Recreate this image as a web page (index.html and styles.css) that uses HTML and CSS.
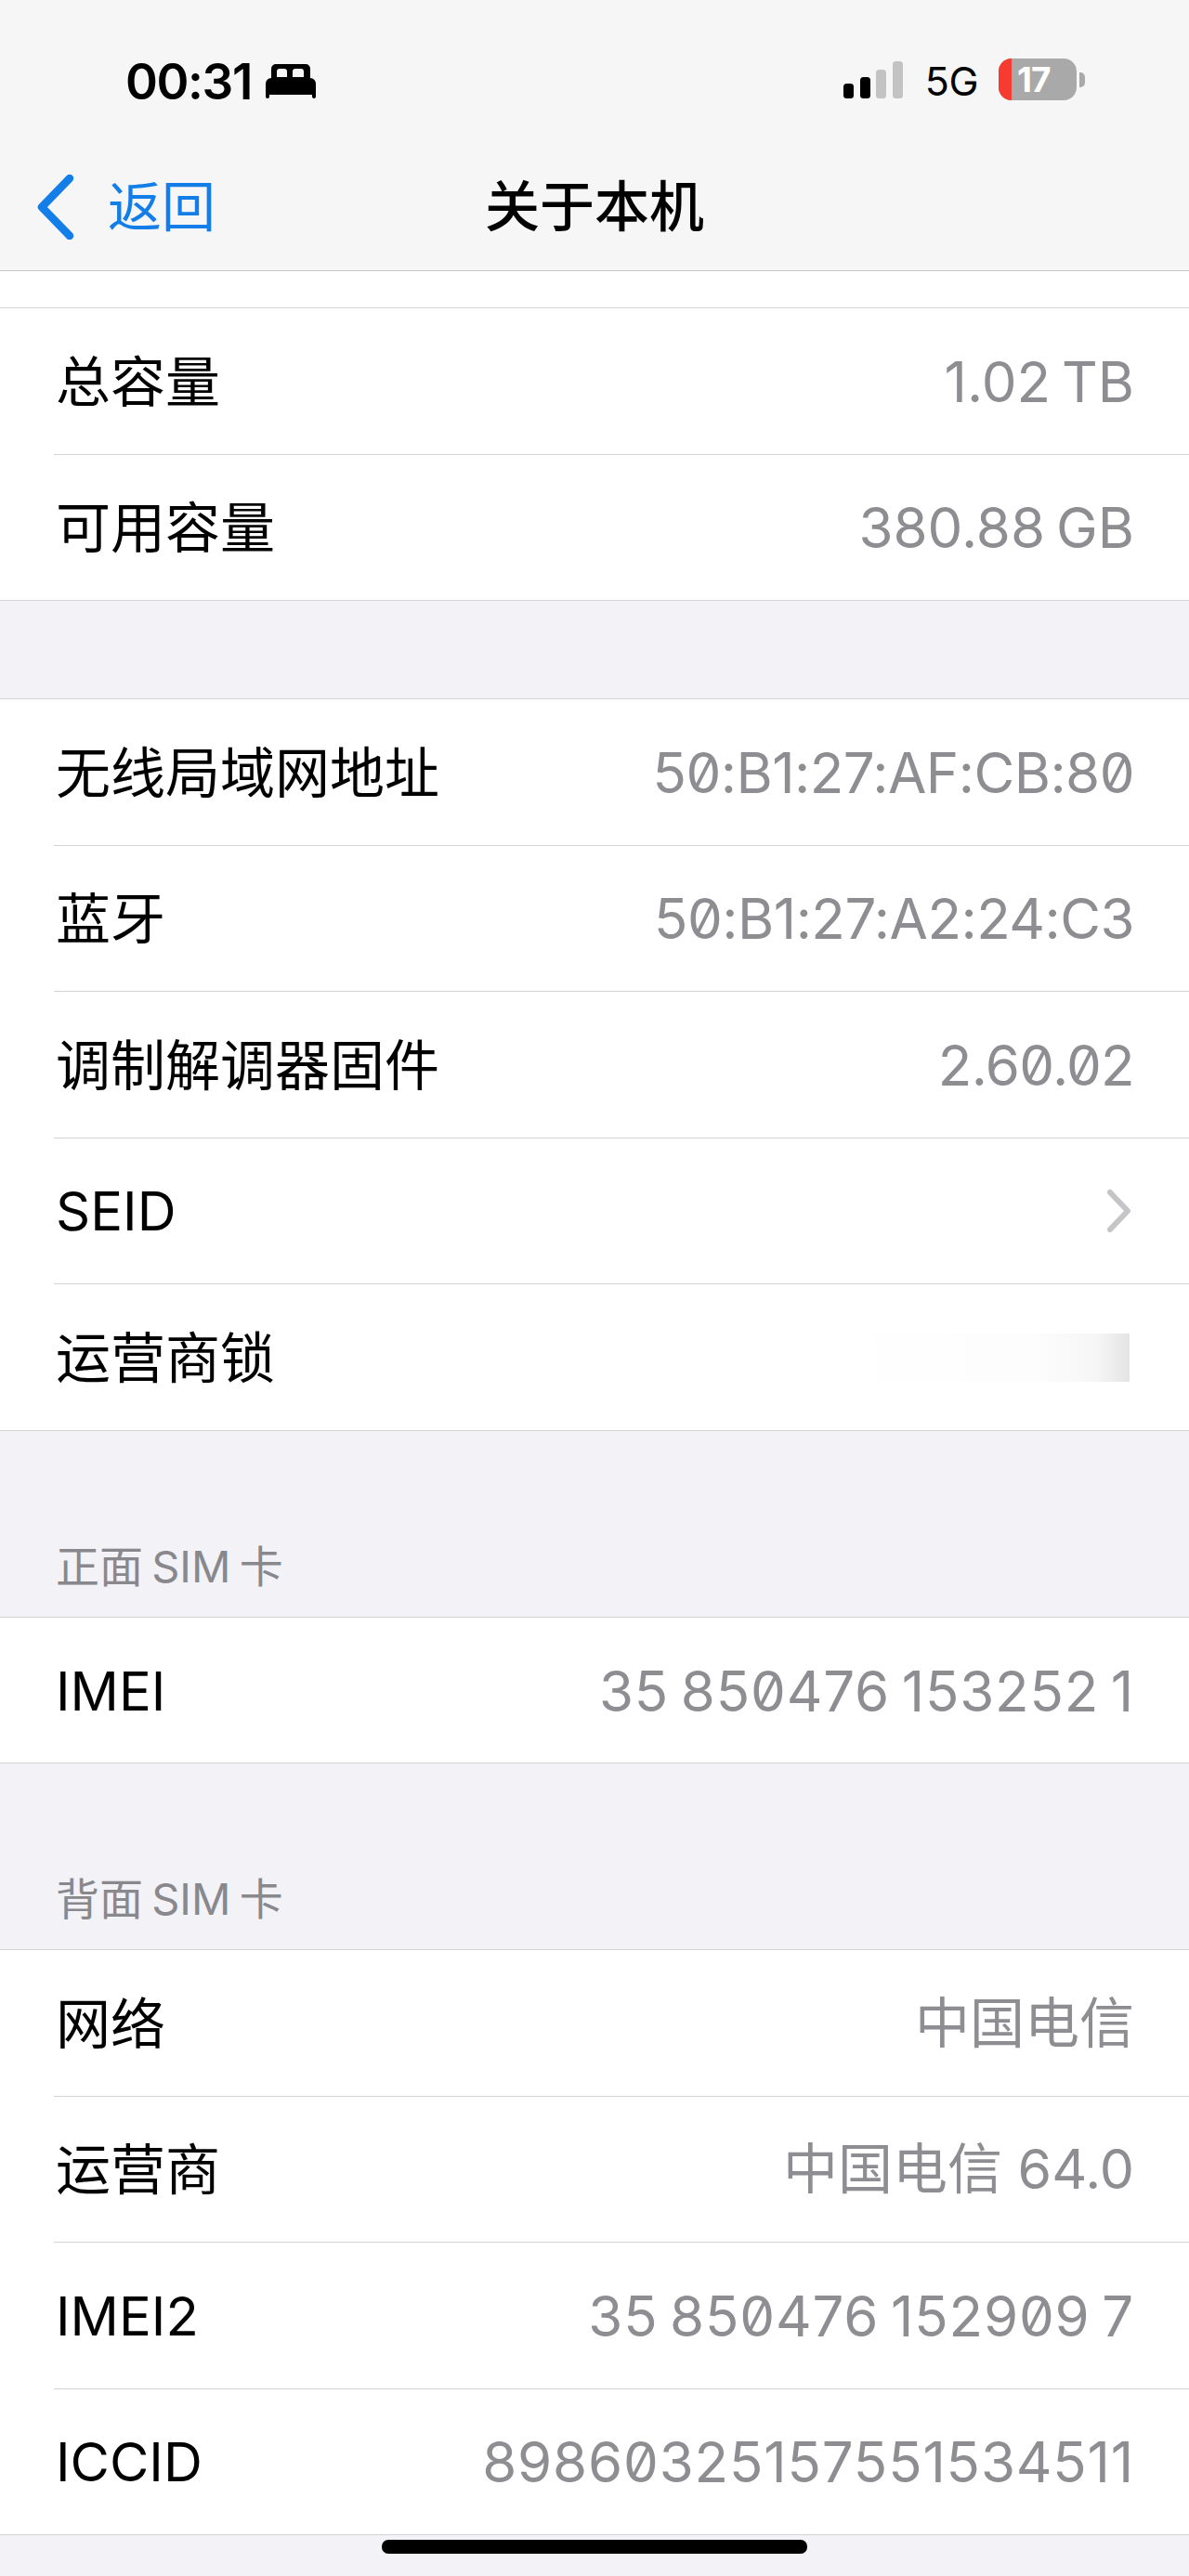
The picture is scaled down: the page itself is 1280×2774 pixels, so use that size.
FILE: index.html
```html
<!DOCTYPE html>
<html lang="zh">
<head>
<meta charset="utf-8">
<title>关于本机</title>
<link rel="stylesheet" href="styles.css">
</head>
<body>
<div class="screen">
  <header class="top">
    <div class="status">
      <div class="status-left">
        <span class="time">00:31</span>
        <svg class="bed" viewBox="0 0 54 37" aria-hidden="true"><path fill-rule="evenodd" d="M11 0h32a5 5 0 0 1 5 5v10a6 6 0 0 1 6 6v14a2 2 0 0 1-4 0v-2H4v2a2 2 0 0 1-4 0V21a6 6 0 0 1 6-6V5a5 5 0 0 1 5-5zM12 14V8a3 3 0 0 1 3-3h5a3 3 0 0 1 3 3v6zM29 14V8a3 3 0 0 1 3-3h6a3 3 0 0 1 3 3v6z"/></svg>
      </div>
      <div class="status-right">
        <span class="signal"><i class="b1"></i><i class="b2"></i><i class="b3 dim"></i><i class="b4 dim"></i></span>
        <span class="net">5G</span>
        <span class="battery"><span class="fill"></span><span class="level">17</span></span><span class="cap"></span>
      </div>
    </div>
    <nav class="nav">
      <a class="back"><svg class="chev" viewBox="0 0 40 70" aria-hidden="true"><path d="M35 4 5 35l30 31"/></svg><span>返回</span></a>
      <h1>关于本机</h1>
    </nav>
  </header>
  <div class="stub"></div>
  <section class="group">
    <div class="row"><span class="k">总容量</span><span class="v size">1.02 TB</span></div>
    <div class="row"><span class="k">可用容量</span><span class="v size">380.88 GB</span></div>
  </section>
  <section class="group g2">
    <div class="row"><span class="k">无线局域网地址</span><span class="v mac">50:B1:27:AF:CB:80</span></div>
    <div class="row"><span class="k">蓝牙</span><span class="v mac">50:B1:27:A2:24:C3</span></div>
    <div class="row"><span class="k">调制解调器固件</span><span class="v ver">2.60.02</span></div>
    <div class="row"><span class="k lat">SEID</span><svg class="more" viewBox="0 0 30 48" aria-hidden="true"><path d="m5 4 19 20L5 44"/></svg></div>
    <div class="row"><span class="k">运营商锁</span><span class="blur"></span></div>
  </section>
  <h2 class="cap-head">正面 SIM 卡</h2>
  <section class="group">
    <div class="row"><span class="k lat">IMEI</span><span class="v">35 850476 153252 1</span></div>
  </section>
  <h2 class="cap-head">背面 SIM 卡</h2>
  <section class="group">
    <div class="row"><span class="k">网络</span><span class="v cjk">中国电信</span></div>
    <div class="row"><span class="k">运营商</span><span class="v cjk">中国电信 64.0</span></div>
    <div class="row"><span class="k lat">IMEI2</span><span class="v">35 850476 152909 7</span></div>
    <div class="row"><span class="k lat">ICCID</span><span class="v">89860325157551534511</span></div>
  </section>
  <div class="home"></div>
</div>
</body>
</html>
```
FILE: styles.css
```css
* { box-sizing: border-box; }
html, body { margin: 0; padding: 0; }
body { background: #f2f2f7; font-family: "Inter", "Noto Sans CJK SC", sans-serif; color: #000; }
.screen { position: relative; width: 1280px; height: 2774px; overflow: hidden; background: #f2f2f7; }
.top { height: 292px; background: #f6f6f6; border-bottom: 1px solid #c8c8ca; }
.status { height: 165px; display: flex; justify-content: space-between; padding: 58px 112px 0 135px; }
.status-left { display: flex; align-items: flex-start; gap: 15px; }
.time { font-size: 53px; line-height: 60px; font-weight: 600; letter-spacing: -1.4px; }
.bed { width: 54px; height: 37px; margin-top: 11px; }
.status-right { display: flex; align-items: flex-start; }
.signal { display: flex; align-items: flex-end; gap: 6.500px; height: 48px; margin-right: 24px; }
.signal i { display: block; width: 11px; background: #000; border-radius: 3.500px; }
.signal .b1 { height: 16px; } .signal .b2 { height: 23px; } .signal .b3 { height: 31px; } .signal .b4 { height: 40px; }
.signal .dim { background: #c3c3c3; }
.net { font-size: 43px; line-height: 48px; font-weight: 400; letter-spacing: -.5px; margin-right: 22px; padding-top: 5px; }
.battery { position: relative; display: block; width: 84px; height: 45px; margin-top: 5px; background: #a9a9a9; border-radius: 14px; overflow: hidden; }
.fill { position: absolute; left: 0; top: 0; bottom: 0; width: 14px; background: #f73b30; }
.level { position: absolute; left: 20px; top: 0; color: #fff; font-size: 37px; line-height: 45px; font-weight: 700; letter-spacing: -1px; }
.cap { display: block; width: 6px; height: 16px; margin: 20px 0 0 3px; background: #a9a9a9; border-radius: 0 5px 5px 0; }
.nav { position: relative; height: 126px; display: flex; align-items: flex-start; justify-content: center; }
.nav h1 { margin: 0; font-size: 59px; line-height: 60px; font-weight: 500; padding-top: 28px; }
.back { position: absolute; left: 40px; top: 22px; display: flex; align-items: center; gap: 36px; color: #147ee8; font-size: 58px; line-height: 72px; }
.chev { width: 40px; height: 70px; fill: none; stroke: #147ee8; stroke-width: 8.500; stroke-linecap: round; stroke-linejoin: round; }
.stub { height: 40px; background: #fff; border-bottom: 1px solid #d4d4d6; }
.group { background: #fff; border-bottom: 1px solid #d4d4d6; }
.g2 { margin-top: 105px; border-top: 1px solid #d4d4d6; }
.row { height: 156.500px; display: flex; align-items: center; justify-content: space-between; padding: 2px 60px 0; position: relative; }
.row + .row { height: 157.500px; }
.row + .row::before { content: ""; position: absolute; left: 58px; right: 0; top: 0; height: 1px; background: #d4d4d6; }
.k { font-size: 59px; line-height: 70px; padding-top: 2px; }
.k.lat { font-size: 58px; padding-top: 0; }
.v { font-size: 60px; line-height: 70px; color: #8e8e92; letter-spacing: .8px; word-spacing: -5px; margin-right: -1px; font-variant-numeric: slashed-zero; }
.v.size { letter-spacing: 0; font-variant-numeric: normal; }
.v.ver { letter-spacing: -.7px; }
.v.mac { letter-spacing: -.55px; }
.v.cjk { font-size: 59px; letter-spacing: 0; word-spacing: 0; font-variant-numeric: normal; }
.more { width: 30px; height: 48px; fill: none; stroke: #c5c5c7; stroke-width: 6; stroke-linecap: round; stroke-linejoin: round; }
.blur { width: 359px; height: 52px; background: linear-gradient(90deg, #fff, #fdfdfd 70%, #f6f6f6 90%, #e4e4e4 100%); margin-right: 4px; }
.cap-head { margin: 0; height: 201px; padding: 116px 60px 0; border-bottom: 1px solid #d4d4d6; font-size: 47px; line-height: 60px; font-weight: 400; color: #88888d; word-spacing: -4px; }
.home { position: absolute; left: 411px; top: 2735px; width: 458px; height: 15px; border-radius: 7px; background: #000; }
```
